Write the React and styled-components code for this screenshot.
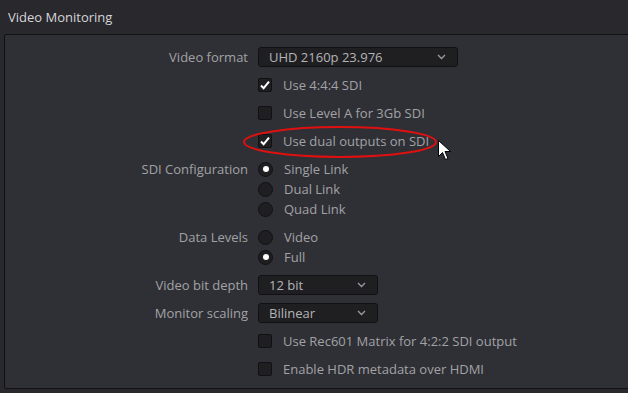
import React from "react";
import styled, { createGlobalStyle } from "styled-components";

const GlobalStyle = createGlobalStyle`
  html, body {
    margin: 0;
    padding: 0;
    background: #28282d;
    overflow: hidden;
  }
  body {
    font-family: "Open Sans", "Noto Sans", sans-serif;
    font-size: 13px;
  }
`;

const Page = styled.div`
  position: relative;
  width: 628px;
  height: 393px;
  background: #28282d;
`;

const Header = styled.div`
  height: 34px;
  display: flex;
  align-items: center;
  padding-left: 8px;
  color: #d6d6d8;
  font-size: 13px;
`;

const Panel = styled.div`
  margin-left: 4px;
  margin-right: -10px;
  height: 355px;
  box-sizing: border-box;
  border: 1px solid #111113;
  border-radius: 2px;
  background: #2f3035;
  padding-top: 8px;
  display: flex;
  flex-direction: column;
`;

const Row = styled.div`
  display: grid;
  grid-template-columns: 243px 1fr;
  column-gap: 10px;
  margin-top: ${(p) => p.$mt || 0}px;
`;

const Label = styled.div`
  height: ${(p) => p.$h || 28}px;
  display: flex;
  align-items: center;
  justify-content: flex-end;
  color: #a2a2a6;
  white-space: nowrap;
`;

const Controls = styled.div`
  display: flex;
  flex-direction: column;
`;

const Item = styled.div`
  height: ${(p) => p.$h || 28}px;
  display: flex;
  align-items: center;
  gap: 11px;
  color: #a2a2a6;
  white-space: nowrap;
`;

const Select = styled.div`
  width: ${(p) => p.$w}px;
  height: 20px;
  box-sizing: border-box;
  border: 1px solid #111113;
  border-radius: 3px;
  background: #1f1f22;
  display: flex;
  align-items: center;
  justify-content: space-between;
  padding: 0 11px 0 10px;
  color: #b4b4b8;
`;

const Box = styled.div`
  width: 14px;
  height: 14px;
  box-sizing: border-box;
  border: 1px solid #111113;
  border-radius: 2px;
  background: #1f1f22;
  display: flex;
  align-items: center;
  justify-content: center;
`;

const Radio = styled.div`
  width: 15px;
  height: 15px;
  box-sizing: border-box;
  border-radius: 50%;
  border: 1px solid #111113;
  background: #1f1f22;
  display: flex;
  align-items: center;
  justify-content: center;
  &::after {
    content: "";
    width: 6px;
    height: 6px;
    border-radius: 50%;
    background: ${(p) => (p.$on ? "#ffffff" : "transparent")};
  }
`;

const Overlay = styled.svg`
  position: absolute;
  left: 0;
  top: 0;
  pointer-events: none;
`;

const Chevron = () => (
  <svg width="9" height="6" viewBox="0 0 9 6">
    <path d="M1 1 L4.5 4.5 L8 1" fill="none" stroke="#9c9ca0" strokeWidth="1.3" />
  </svg>
);

const Check = ({ on }) => (
  <Box>
    {on && (
      <svg width="12" height="12" viewBox="0 0 12 12">
        <path d="M2 6.5 L4.6 9.2 L10 2.6" fill="none" stroke="#ffffff" strokeWidth="2" />
      </svg>
    )}
  </Box>
);

function CheckRow({ on, children }) {
  return (
    <Row>
      <span />
      <Controls>
        <Item>
          <Check on={on} />
          {children}
        </Item>
      </Controls>
    </Row>
  );
}

function SelectRow({ label, value, width, mt }) {
  return (
    <Row $mt={mt}>
      <Label>{label}</Label>
      <Controls>
        <Item>
          <Select $w={width}>
            <span>{value}</span>
            <Chevron />
          </Select>
        </Item>
      </Controls>
    </Row>
  );
}

function RadioRow({ label, options, selected, mt }) {
  return (
    <Row $mt={mt}>
      <Label $h={20}>{label}</Label>
      <Controls>
        {options.map((o) => (
          <Item key={o} $h={20}>
            <Radio $on={o === selected} />
            {o}
          </Item>
        ))}
      </Controls>
    </Row>
  );
}

export default function App() {
  return (
    <Page>
      <GlobalStyle />
      <Header>Video Monitoring</Header>
      <Panel>
        <SelectRow label="Video format" value="UHD 2160p 23.976" width={200} />
        <CheckRow on>Use 4:4:4 SDI</CheckRow>
        <CheckRow>Use Level A for 3Gb SDI</CheckRow>
        <CheckRow on>Use dual outputs on SDI</CheckRow>
        <RadioRow label="SDI Configuration" options={["Single Link", "Dual Link", "Quad Link"]} selected="Single Link" mt={4} />
        <RadioRow label="Data Levels" options={["Video", "Full"]} selected="Full" mt={8} />
        <SelectRow label="Video bit depth" value="12 bit" width={120} mt={4} />
        <SelectRow label="Monitor scaling" value="Bilinear" width={120} />
        <CheckRow>Use Rec601 Matrix for 4:2:2 SDI output</CheckRow>
        <CheckRow>Enable HDR metadata over HDMI</CheckRow>
      </Panel>
      <Overlay width="628" height="393" viewBox="0 0 628 393">
        <ellipse cx="340" cy="142" rx="96" ry="15" fill="none" stroke="#e01010" strokeWidth="2" />
        <path
          d="M438.5 140.5 L438.5 156.5 L442.5 152.5 L445.5 159.5 L448 158.5 L445 151.5 L450.5 151.5 Z"
          fill="#ffffff"
          stroke="#000000"
          strokeWidth="1"
          strokeLinejoin="miter"
        />
      </Overlay>
    </Page>
  );
}
